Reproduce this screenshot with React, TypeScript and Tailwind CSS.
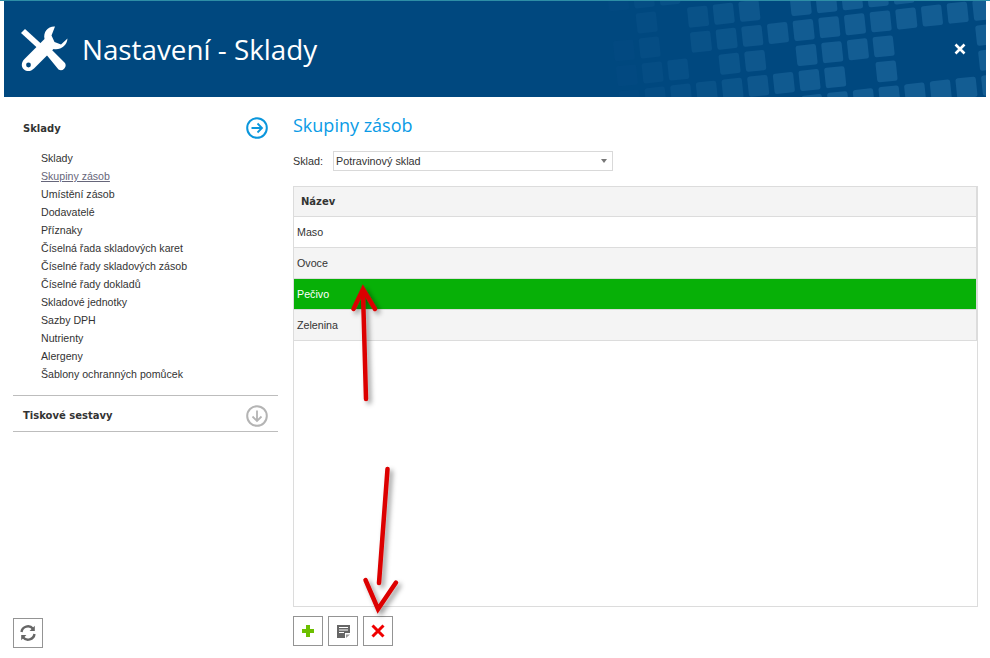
import React from "react";

const FONT = "font-['Liberation_Sans',Arial,sans-serif]";
const HEAD = "font-['Open_Sans','Liberation_Sans',sans-serif]";
const BOLD = "font-['DejaVu_Sans','Liberation_Sans',sans-serif] font-bold text-[10px]";

const items = [
  "Sklady",
  "Skupiny zásob",
  "Umístění zásob",
  "Dodavatelé",
  "Příznaky",
  "Číselná řada skladových karet",
  "Číselné řady skladových zásob",
  "Číselné řady dokladů",
  "Skladové jednotky",
  "Sazby DPH",
  "Nutrienty",
  "Alergeny",
  "Šablony ochranných pomůcek",
];

const cells: [number, number][] = [
  [-3, -2], [-2, -2], [-1, -2],
  [-2, -1], [0, -1], [1, -1], [2, -1], [4, -1], [5, -1], [6, -1], [7, -1], [8, -1],
  [-3, 0], [-2, 0], [0, 0], [1, 0], [2, 0], [3, 0], [4, 0], [5, 0], [6, 0], [7, 0], [8, 0], [9, 0], [10, 0], [11, 0],
  [-3, 1], [-2, 1], [-1, 1], [1, 1], [2, 1], [4, 1], [5, 1], [6, 1], [7, 1], [11, 1],
  [-3, 2], [-2, 2], [-1, 2], [0, 2], [1, 2], [2, 2], [3, 2], [4, 2], [5, 2], [7, 2], [11, 2],
  [4, 3], [5, 3], [6, 3], [7, 3], [8, 3], [9, 3], [10, 3], [11, 3],
];

function Pattern() {
  return (
    <svg className="absolute right-0 top-0" width="426" height="96" viewBox="560 1 426 96">
      {cells.map(([i, j]) => {
        const cx = 660 + (123 + 77 * i + 8.8 * j) / 3;
        const cy = (125 - 8.7 * i + 75 * j) / 3;
        const op = i <= -3 ? 0.03 : i === -2 ? 0.08 : Math.min(0.3, 0.11 + (i + 1) * 0.035);
        return (
          <rect
            key={`${i}-${j}`}
            x={cx - 10.2}
            y={cy - 10.2}
            width={20.4}
            height={20.4}
            rx={2.5}
            fill="#3f8fc4"
            opacity={op}
            transform={`rotate(-6 ${cx} ${cy})`}
          />
        );
      })}
    </svg>
  );
}

function ToolsIcon() {
  return (
    <svg width="48" height="48" viewBox="0 0 48 48" className="shrink-0">
      <path d="M0 8 L4 4 L27 25 L23 29 Z" fill="#fff" />
      <path d="M24 28 L29 23 L44 38 A4.8 4.8 0 0 1 37.500 44.500 Z" fill="#fff" />
      <path
        d="M34 1.500 C27 1 22 7 23.500 14 L3.500 34 C0 37.500 0 42 3 44.500 C6 47 10 46.500 13 43.500 L32.500 24 C39 25.500 46 21 46.500 13.500 L40 19.500 L33.500 17 L30.500 10.500 Z"
        fill="#fff"
      />
      <circle cx="7.500" cy="40" r="2.400" fill="#00487f" />
    </svg>
  );
}

function CircleArrow({ down, color, size = 22 }: { down?: boolean; color: string; size?: number }) {
  return (
    <svg width={size} height={size} viewBox="0 0 22 22" fill="none" stroke={color}>
      <circle cx="11" cy="11" r="9.800" strokeWidth="2" />
      {down ? (
        <path d="M11 5.500 V16 M6.500 11.500 L11 16 L15.500 11.500" strokeWidth="1.800" />
      ) : (
        <path d="M5.500 11 H16 M11.500 6.500 L16 11 L11.500 15.500" strokeWidth="1.800" />
      )}
    </svg>
  );
}

function IconButton({ children }: { children: React.ReactNode }) {
  return (
    <button className="flex h-[30px] w-[30px] items-center justify-center border border-[#949494] bg-white">
      {children}
    </button>
  );
}

function Arrows() {
  return (
    <svg className="pointer-events-none absolute left-0 top-0" width="990" height="658" fill="none">
      <defs>
        <filter id="arrow-shadow" x="-100%" y="-20%" width="300%" height="140%">
          <feDropShadow dx="3" dy="3" stdDeviation="2.500" floodColor="#000" floodOpacity="0.4" />
        </filter>
      </defs>
      <g stroke="#dc0000" strokeWidth="4.500" strokeLinecap="round" strokeLinejoin="miter" filter="url(#arrow-shadow)">
        <path d="M366 399 L363 292" />
        <path d="M353.500 309 L363 289 L375 309" />
        <path d="M387.500 469 L379 583" />
        <path d="M365.500 580 L378 609 L396 582.500" />
      </g>
    </svg>
  );
}

export default function App() {
  return (
    <div className={`relative flex h-[658px] w-[990px] flex-col overflow-hidden bg-white ${FONT}`}>
      <div className="h-px bg-[#2d8ea6]" />
      <header className="relative mx-1 flex h-[96px] items-center bg-[#00487f]">
        <Pattern />
        <div className="relative ml-[17px]">
          <ToolsIcon />
        </div>
        <h1 className={`relative ml-[13px] pt-[2px] text-[27.800px] leading-none text-white ${HEAD}`}>Nastavení - Sklady</h1>
        <svg className="absolute left-[950px] top-[42px]" width="12" height="12" viewBox="0 0 12 12">
          <path d="M1.500 1.500 L10.500 10.500 M10.500 1.500 L1.500 10.500" stroke="#fff" strokeWidth="2.600" />
        </svg>
      </header>

      <div className="flex min-h-0 flex-1">
        <aside className="ml-[13px] flex w-[265px] flex-col text-[10.600px] text-[#333]">
          <div className="mt-[20px] flex h-[22px] items-center justify-between px-[10px]">
            <span className={BOLD}>Sklady</span>
            <CircleArrow color="#0a96dc" />
          </div>
          <ul className="mt-[10px] pl-[28px]">
            {items.map((t, i) => (
              <li key={t} className={`h-[18px] leading-[18px] ${i === 1 ? "text-[#66667a] underline" : ""}`}>
                {t}
              </li>
            ))}
          </ul>
          <div className="mt-[12px] flex h-[37px] items-center justify-between border-y border-[#bdbdbd] px-[10px] pt-[4px]">
            <span className={BOLD}>Tiskové sestavy</span>
            <CircleArrow down color="#b4b4b4" />
          </div>
          <div className="mb-[10px] mt-auto">
            <IconButton>
              <svg width="18" height="18" viewBox="0 0 18 18" fill="none" stroke="#666" strokeWidth="2.400">
                <path d="M2.500 8 A6.500 6.500 0 0 1 14 4.800" />
                <path d="M15.500 10 A6.500 6.500 0 0 1 4 13.200" />
                <path d="M15.800 1.800 V7 H10.600 Z" fill="#666" stroke="none" />
                <path d="M2.200 16.200 V11 H7.400 Z" fill="#666" stroke="none" />
              </svg>
            </IconButton>
          </div>
        </aside>

        <main className="ml-[15px] flex w-[685px] flex-col">
          <h2 className={`mt-[18px] h-[20px] text-[18px] leading-[20px] text-[#0a9be6] ${HEAD}`}>Skupiny zásob</h2>
          <div className="mt-[16px] flex h-[20px] items-center text-[10.800px] text-[#333]">
            <span className="w-[40px]">Sklad:</span>
            <div className="flex h-[20px] w-[280px] items-center justify-between border border-[#d9d9d9] pl-[2px] pr-[5px]">
              <span>Potravinový sklad</span>
              <span className="h-0 w-0 border-x-[3.500px] border-t-[4px] border-x-transparent border-t-[#777]" />
            </div>
          </div>
          <div className="mt-[15px] flex h-[421px] flex-col border border-[#dcdcdc] text-[10.700px] text-[#333]">
            <div className={`flex h-[30px] shrink-0 items-center border-b border-r border-[#dcdcdc] bg-[#f4f4f4] pl-[7px] ${BOLD}`}>
              Název
            </div>
            {[
              ["Maso", "bg-white"],
              ["Ovoce", "bg-[#f4f4f4]"],
              ["Pečivo", "bg-[#07b007] text-white"],
              ["Zelenina", "bg-[#f4f4f4]"],
            ].map(([t, c]) => (
              <div key={t} className={`flex h-[31px] shrink-0 items-center border-b border-r border-[#dcdcdc] pl-[3px] ${c}`}>
                {t}
              </div>
            ))}
          </div>
          <div className="mt-[9px] flex gap-[5px]">
            <IconButton>
              <svg width="12" height="12" viewBox="0 0 12 12">
                <path d="M4 0 H8 V4 H12 V8 H8 V12 H4 V8 H0 V4 H4 Z" fill="#6cbf00" />
              </svg>
            </IconButton>
            <IconButton>
              <svg width="13" height="13" viewBox="0 0 13 13">
                <path d="M0 0 H13 V8 H8 V13 H0 Z" fill="#666" />
                <path d="M2 2.500 H11 M2 5 H11 M2 7.500 H7" stroke="#fff" strokeWidth="1" />
                <path d="M9 9.500 H13 L9 13 Z" fill="#999" />
              </svg>
            </IconButton>
            <IconButton>
              <svg width="14" height="14" viewBox="0 0 14 14">
                <path d="M1.500 1.500 L12.500 12.500 M12.500 1.500 L1.500 12.500" stroke="#f00000" strokeWidth="3" />
              </svg>
            </IconButton>
          </div>
        </main>
      </div>
      <Arrows />
    </div>
  );
}
